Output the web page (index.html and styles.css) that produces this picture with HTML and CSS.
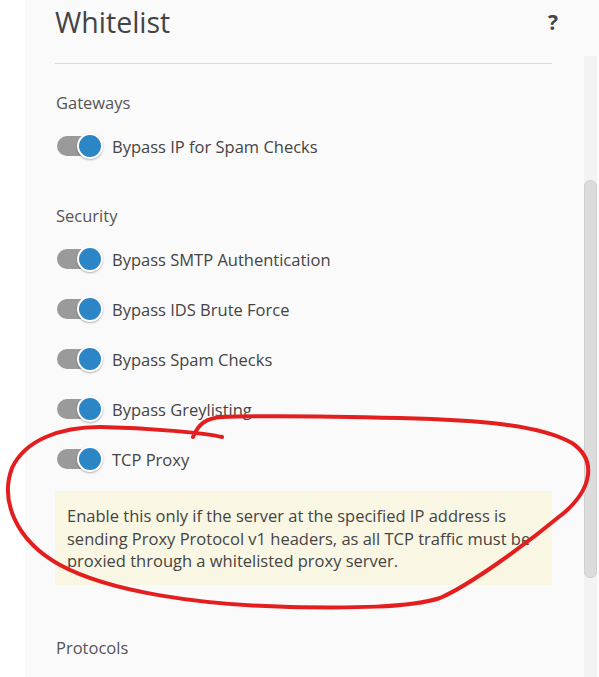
FILE: index.html
```html
<!DOCTYPE html>
<html>
<head>
<meta charset="utf-8">
<link rel="stylesheet" href="styles.css">
</head>
<body>
<div class="panel">
  <div class="content">
    <div class="header">
      <h1 class="title">Whitelist</h1>
      <a class="help">?</a>
    </div>
    <hr class="rule">
    <div class="section first">
      <div class="section-title">Gateways</div>
      <div class="row"><span class="toggle"><span class="knob"></span></span><span class="label">Bypass IP for Spam Checks</span></div>
    </div>
    <div class="section">
      <div class="section-title">Security</div>
      <div class="row"><span class="toggle"><span class="knob"></span></span><span class="label">Bypass SMTP Authentication</span></div>
      <div class="row"><span class="toggle"><span class="knob"></span></span><span class="label">Bypass IDS Brute Force</span></div>
      <div class="row"><span class="toggle"><span class="knob"></span></span><span class="label">Bypass Spam Checks</span></div>
      <div class="row"><span class="toggle"><span class="knob"></span></span><span class="label">Bypass Greylisting</span></div>
      <div class="row"><span class="toggle"><span class="knob"></span></span><span class="label">TCP Proxy</span></div>
      <div class="notice">Enable this only if the server at the specified IP address is<br>sending Proxy Protocol v1 headers, as all TCP traffic must be<br>proxied through a whitelisted proxy server.</div>
    </div>
    <div class="section last">
      <div class="section-title">Protocols</div>
    </div>
  </div>
  <div class="scrollbar"><div class="thumb"></div></div>
</div>
<svg class="annotation" width="599" height="677" viewBox="0 0 599 677">
  <path d="M222 437 C205 433 150 428 100 427 C60 427 25 440 12 468 C0 500 15 540 60 565 C110 592 200 605 290 607 C350 608 410 608 440 598 C470 585 525 545 565 512 C592 488 597 460 572 443 C540 425 480 420 400 418 C320 416 250 416 222 417 C205 418 198 425 193 437" fill="none" stroke="#e41e1e" stroke-width="4" stroke-linecap="round" stroke-linejoin="round"/>
</svg>
</body>
</html>
```

FILE: styles.css
```css
html, body {
  margin: 0;
  padding: 0;
  background: #ffffff;
  height: 677px;
  overflow: hidden;
}
body {
  font-family: "Open Sans", "Noto Sans", sans-serif;
  color: #444;
  position: relative;
}
.panel {
  margin-left: 25px;
  height: 677px;
  background: #fafafa;
  display: flex;
  padding-left: 30px;
  overflow: hidden;
}
.content {
  width: 497px;
  flex: none;
}
.header {
  height: 44px;
  display: flex;
  align-items: center;
  justify-content: space-between;
}
.title {
  margin: 0;
  font-size: 28.5px;
  font-weight: 400;
  line-height: 44px;
  color: #444;
}
.help {
  font-size: 21px;
  font-weight: 700;
  color: #444;
  margin-right: -6px;
  line-height: 44px;
}
.rule {
  margin: 19px 0 0 0;
  border: 0;
  border-top: 1px solid #dcdcdc;
  height: 0;
}
.section {
  margin-top: 33px;
}
.section.first {
  margin-top: 27px;
}
.section.last {
  margin-top: 51px;
}
.section-title {
  font-size: 16.5px;
  line-height: 24px;
  height: 24px;
  color: #555;
  margin-bottom: 6px;
  padding-left: 1px;
}
.row {
  height: 50px;
  display: flex;
  align-items: center;
}
.toggle {
  position: relative;
  width: 46px;
  height: 20px;
  margin-left: 2px;
  flex: none;
}
.toggle::before {
  content: "";
  position: absolute;
  left: 0;
  top: 0;
  width: 36px;
  height: 20px;
  border-radius: 10px;
  background: #9a9a9a;
}
.knob {
  position: absolute;
  right: 0;
  top: -3px;
  width: 22px;
  height: 22px;
  border-radius: 50%;
  background: #2c86c6;
  border: 2px solid #fff;
  box-shadow: 0 1px 2px rgba(0,0,0,0.3);
}
.label {
  margin-left: 9px;
  font-size: 16.5px;
  color: #444;
}
.notice {
  margin-top: 7px;
  background: #f9f7e3;
  padding: 14px 12px 12px 12px;
  font-size: 16.5px;
  line-height: 22.5px;
  color: #444;
  white-space: nowrap;
}
.scrollbar {
  flex: none;
  width: 13px;
  margin-left: 32px;
  margin-top: 56px;
  background: #f3f3f3;
  position: relative;
}
.thumb {
  position: absolute;
  left: 0;
  top: 124px;
  width: 11px;
  height: 396px;
  background: #dcdcdc;
  border: 1px solid #d0d0d0;
  border-radius: 6px;
}
.annotation {
  position: absolute;
  left: 0;
  top: 0;
  pointer-events: none;
}
```
